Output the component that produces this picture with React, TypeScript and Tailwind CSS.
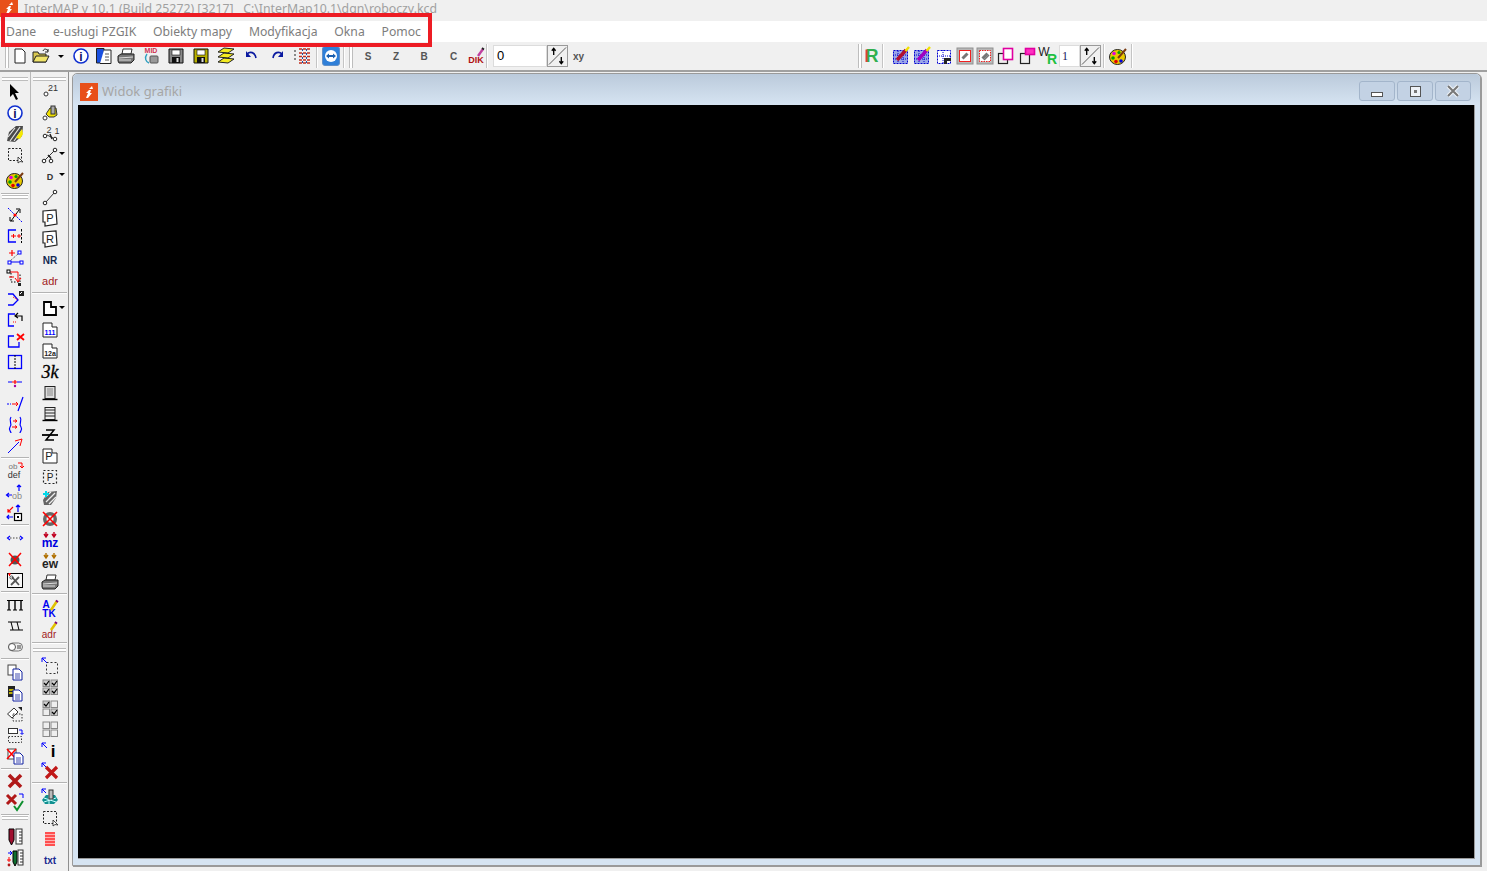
import React, { FC, ReactNode } from 'react';

const B = '#0000ff';
const R = '#ff0000';
const K = '#000000';

const Ico: FC<{ children: ReactNode; w?: number }> = ({ children, w = 20 }) => (
  <svg width={w} height={20} viewBox={`0 0 ${w} 20`} className="block shrink-0">
    {children}
  </svg>
);

const T: FC<{ x: number; y: number; s: number; c?: string; w?: number; children: ReactNode }> = ({ x, y, s, c = K, w = 700, children }) => (
  <text x={x} y={y} fontSize={s} fill={c} fontWeight={w} fontFamily="'Liberation Sans', sans-serif" textAnchor="middle">
    {children}
  </text>
);

const Dot: FC<{ x: number; y: number; r?: number; c?: string }> = ({ x, y, r = 1.8, c = '#222' }) => (
  <circle cx={x} cy={y} r={r} fill="#fff" stroke={c} strokeWidth="1" />
);

const Palette = () => (
  <Ico>
    <ellipse cx="9.5" cy="11" rx="8" ry="7.5" fill="#e8c800" stroke="#222" />
    <circle cx="6" cy="7.5" r="1.8" fill="#e000e0" />
    <circle cx="11" cy="6.5" r="1.6" fill="#00a000" />
    <circle cx="5" cy="12" r="1.8" fill="#00a000" />
    <circle cx="8" cy="15.5" r="1.8" fill="#e00000" />
    <circle cx="13" cy="15" r="1.8" fill="#0000e0" />
    <path d="M10 12 L18 3" stroke="#7a3a10" strokeWidth="2" />
  </Ico>
);

const Cursor = () => (
  <Ico>
    <path d="M5 2 L5 15 L8 12 L11 18 L13 17 L10 11 L14 11 Z" fill={K} />
  </Ico>
);

const Info = () => (
  <Ico>
    <circle cx="10" cy="10" r="7" fill="#fff" stroke="#1030d0" strokeWidth="1.6" />
    <T x={10} y={14.5} s={12} c="#101060">i</T>
  </Ico>
);

const Hatch = () => (
  <Ico>
    <path d="M2 17 L4 8 L11 2 L18 2 L17 12 L10 18 Z" fill="#4a4a4a" />
    <path d="M3 13 L10 4 M5 17 L15 3 M9 17 L17 6" stroke="#e4e4e4" strokeWidth="1.2" />
    <path d="M11 14 L17 5 L18 10 L15 15 Z" fill="#f5e800" />
  </Ico>
);

const DashSel = () => (
  <Ico>
    <rect x="3.5" y="3.5" width="13" height="12" fill="none" stroke="#222" strokeDasharray="2 1.5" />
    <path d="M13 12 L13 18 L15 16.5 L18 17 Z" fill="#fff" stroke="#222" strokeWidth="0.8" />
  </Ico>
);

const Cross = () => (
  <Ico>
    <path d="M3 3 L17 17" stroke={B} strokeDasharray="2 1" />
    <path d="M6 16 L14 5 M11 4 L15 4 L15 8 M5 12 L5 16 L9 16" stroke={K} fill="none" />
    <circle cx="10" cy="10" r="1.6" fill={R} />
  </Ico>
);

const Extend = () => (
  <Ico>
    <path d="M11 4 L3.5 4 L3.5 16 L11 16" fill="none" stroke={B} strokeWidth="1.3" />
    <path d="M16.5 3 L16.5 17" stroke={K} strokeDasharray="2.5 1.5" />
    <path d="M6 10 L11 10 M8.5 8 L8.5 12 M12 10 L16 10 M14 8 L14 12" stroke={R} />
  </Ico>
);

const Insert = () => (
  <Ico>
    <path d="M4 6 L10 6 M7 3 L7 9" stroke={R} strokeWidth="1.2" />
    <rect x="13" y="4" width="3" height="3" fill="#fff" stroke={B} />
    <path d="M5 15 L15 15" stroke={B} />
    <path d="M13 7 L5 14" stroke="#444" strokeDasharray="1 1" />
    <rect x="3" y="14" width="3" height="3" fill="#fff" stroke={B} />
    <rect x="15" y="14" width="3" height="3" fill="#fff" stroke={B} />
  </Ico>
);

const RedRoute = () => (
  <Ico>
    <path d="M6 5 L6 14 L15 14 L15 5" fill="none" stroke={K} strokeDasharray="1.5 1.5" />
    <path d="M4 4 L13 4 L13 13 M10 10 L13 14 L16 10 M4 9 L9 9" fill="none" stroke={R} />
    <rect x="2" y="2" width="3" height="3" fill="#fff" stroke={K} />
    <rect x="13" y="15" width="3" height="3" fill="#222" />
  </Ico>
);

const Chev = () => (
  <Ico>
    <path d="M3 5 L8 5 L13 11 L8 16 L3 16" fill="none" stroke={B} strokeWidth="1.3" />
    <path d="M8 8 L13 11" stroke={R} strokeDasharray="1 1" />
    <path d="M14 2 L19 2 L19 7 L14 7 Z" fill="#222" />
    <path d="M15 5 L17 3" stroke="#fff" />
  </Ico>
);

const BackArrow = () => (
  <Ico>
    <path d="M10 4 L3.5 4 L3.5 16 L9 16" fill="none" stroke={B} strokeWidth="1.3" />
    <path d="M13 3 L10 6 L13 8 M11 6 L17 6 L17 11" fill="none" stroke={K} strokeWidth="1.2" />
    <path d="M8 12 L12 12" stroke={R} strokeDasharray="1 1" />
  </Ico>
);

const CornerX = () => (
  <Ico>
    <path d="M9 5 L3.5 5 L3.5 16 L14 16 L14 11" fill="none" stroke={B} strokeWidth="1.3" />
    <path d="M12 3 L19 9 M19 3 L12 9" stroke={R} strokeWidth="1.8" />
  </Ico>
);

const Split = () => (
  <Ico>
    <rect x="3.5" y="3.5" width="13" height="13" fill="none" stroke={B} strokeWidth="1.3" />
    <path d="M10 3 L10 17" stroke={K} strokeDasharray="2 1" />
  </Ico>
);

const SplitLine = () => (
  <Ico>
    <path d="M3 9 L7 9 M12 9 L17 9" stroke={B} strokeWidth="1.2" />
    <path d="M7 9 L12 9 M10 7 L10 11" stroke={R} strokeWidth="1.2" />
    <circle cx="10" cy="13" r="1.2" fill="#a000a0" />
  </Ico>
);

const ArrowSlash = () => (
  <Ico>
    <path d="M2 10 L6 10" stroke={B} strokeDasharray="2 1" strokeWidth="1.2" />
    <path d="M7 10 L13 10 M11 8 L13 10 L11 12" fill="none" stroke={R} />
    <path d="M18 3 L13 17" stroke={B} strokeWidth="1.2" />
  </Ico>
);

const Waves = () => (
  <Ico>
    <path d="M6 2 C3 6 8 8 5 12 C3 15 6 16 6 18 M15 2 C18 6 13 8 16 12 C18 15 15 16 15 18" fill="none" stroke={B} strokeWidth="1.2" />
    <path d="M8 6 L12 6 M10 4.5 L12 6 L10 7.5 M7 12 L12 12 M10 10.5 L12 12 L10 13.5" fill="none" stroke={R} />
  </Ico>
);

const Diag = () => (
  <Ico>
    <path d="M3 17 L14 6" stroke={B} />
    <path d="M10 5 L17 3 L15 10" fill="none" stroke={R} />
  </Ico>
);

const ObDef = () => (
  <Ico>
    <T x={8} y={8} s={8} c="#777" w={400}>ob</T>
    <T x={9} y={17} s={9} c="#333" w={400}>def</T>
    <path d="M13 2 L17 2 L17 7 M15 5 L17 7 L19 5" fill="none" stroke={R} />
  </Ico>
);

const ArrowsOb = () => (
  <Ico>
    <T x={12} y={17} s={9} c="#888" w={400}>ob</T>
    <path d="M7 13 L1.5 13 M4 11 L1.5 13 L4 15 M14 9 L14 3 M12 5 L14 3 L16 5" fill="none" stroke={B} strokeWidth="1.2" />
  </Ico>
);

const ArrowsBox = () => (
  <Ico>
    <rect x="9.5" y="10.5" width="7" height="7" fill="#fff" stroke={K} strokeWidth="1.2" />
    <rect x="12" y="13" width="2" height="2" fill={K} />
    <path d="M8 14 L2 14 M4 12 L2 14 L4 16 M13 9 L13 2 M11 4 L13 2 L15 4" fill="none" stroke={B} strokeWidth="1.2" />
    <path d="M8 4 L3 9 M3 6 L3 9 L6 9" fill="none" stroke={R} strokeWidth="1.2" />
  </Ico>
);

const Width = () => (
  <Ico>
    <path d="M5 10 L15 10" stroke="#444" strokeDasharray="1.5 1.5" />
    <path d="M5 8 L2.5 10 L5 12 M15 8 L17.5 10 L15 12" fill="none" stroke={B} strokeWidth="1.2" />
  </Ico>
);

const NodeX = () => (
  <Ico>
    <circle cx="10" cy="11" r="4.5" fill="#555" />
    <path d="M4 4 L16 17 M16 4 L4 17" stroke={R} strokeWidth="1.5" />
  </Ico>
);

const BoxTools = () => (
  <Ico>
    <rect x="2.5" y="3.5" width="15" height="14" fill="#f8f8f8" stroke={K} />
    <path d="M6 15 L14 7 M7 7 L14 15" stroke="#555" strokeWidth="1.8" />
    <circle cx="6.5" cy="7.5" r="1.6" fill="none" stroke="#444" />
    <path d="M3 4 L6 4 M4.5 3 L4.5 6" stroke={R} />
  </Ico>
);

const Rail = () => (
  <Ico>
    <path d="M2 5.5 L18 5.5 M2 15 L6 15 M8 15 L12 15 M14 15 L18 15" stroke={K} />
    <path d="M4 5 L4 15 M10 5 L10 15 M16 5 L16 15" stroke={K} strokeWidth="1.4" />
  </Ico>
);

const Stairs = () => (
  <Ico>
    <path d="M3 6 L16 6 M5 14 L18 14 M6 6 L8 14 M12 6 L14 14" stroke={K} fill="none" />
  </Ico>
);

const Pipe = () => (
  <Ico>
    <rect x="3.5" y="6" width="14" height="8" rx="4" fill="#eee" stroke="#777" />
    <circle cx="7" cy="10" r="3.5" fill="#fff" stroke="#555" />
    <rect x="12" y="8" width="4" height="4" fill="#999" />
  </Ico>
);

const Doc: FC<{ x: number; y: number; fill?: string }> = ({ x, y, fill = '#fff' }) => (
  <g>
    <path d={`M${x} ${y} L${x + 6} ${y} L${x + 9} ${y + 3} L${x + 9} ${y + 11} L${x} ${y + 11} Z`} fill={fill} stroke="#1020a0" />
    <path d={`M${x + 2} ${y + 5} L${x + 7} ${y + 5} M${x + 2} ${y + 7} L${x + 7} ${y + 7} M${x + 2} ${y + 9} L${x + 7} ${y + 9}`} stroke="#1020a0" strokeWidth="0.8" />
  </g>
);

const Copy1 = () => (
  <Ico>
    <rect x="3" y="3" width="8" height="10" fill="#fff" stroke="#444" />
    <Doc x={8} y={7} />
  </Ico>
);

const Copy2 = () => (
  <Ico>
    <path d="M3 3 L10 3 L10 14 L3 14 Z" fill="#222" />
    <path d="M4 7 L9 7 M4 10 L9 10" stroke="#f0e000" strokeWidth="1.4" />
    <Doc x={8} y={7} />
  </Ico>
);

const Diamond = () => (
  <Ico>
    <path d="M2.5 10 L9 4 L13 8 L7 14 Z" fill="#fff" stroke="#333" />
    <rect x="8" y="10" width="9" height="7" fill="none" stroke="#333" strokeDasharray="1.5 1.5" />
    <path d="M13 3 L17 3 L17 7 Z" fill="#222" />
  </Ico>
);

const BoxFlip = () => (
  <Ico>
    <rect x="3.5" y="3.5" width="9" height="5" fill="#fff" stroke="#333" />
    <rect x="3.5" y="11.5" width="13" height="6" fill="none" stroke="#333" strokeDasharray="1.5 1.5" />
    <path d="M14 5 L17 5 L17 9 M15.5 8 L17 9.5 L18.5 8" fill="none" stroke={B} />
  </Ico>
);

const DocX = () => (
  <Ico>
    <rect x="3" y="3" width="8" height="10" fill="#fff" stroke="#444" />
    <path d="M2 3 L11 13 M11 3 L2 13" stroke={R} strokeWidth="1.5" />
    <Doc x={9} y={7} />
  </Ico>
);

const BigX = () => (
  <Ico>
    <path d="M4 4 L16 16 M16 4 L4 16" stroke="#b01818" strokeWidth="3.6" />
  </Ico>
);

const XCheck = () => (
  <Ico>
    <path d="M2 3 L11 12 M11 3 L2 12" stroke="#b01818" strokeWidth="3" />
    <path d="M9 14 L12 18 L18 9" fill="none" stroke="#109030" strokeWidth="2" />
    <path d="M14 2 L18 2 L18 6" fill="none" stroke={B} />
  </Ico>
);

const Pencils = () => (
  <Ico>
    <path d="M4 2 L9 2 L9 13 L6.5 18 L4 13 Z" fill="#a01030" stroke={K} />
    <rect x="11" y="2" width="6" height="15" fill="#fff" stroke="#333" />
    <path d="M14 5 L17 5 M14 8 L17 8 M14 11 L17 11 M14 14 L17 14" stroke="#333" />
  </Ico>
);

const Pencils2 = () => (
  <Ico>
    <path d="M8 3 L12 3 L12 14 L10 18 L8 14 Z" fill="#107030" stroke={K} />
    <rect x="13" y="2" width="5" height="15" fill="#fff" stroke="#333" />
    <path d="M15 5 L18 5 M15 8 L18 8 M15 11 L18 11 M15 14 L18 14" stroke="#333" />
    <path d="M3 5 L7 5 M5 3 L7 5 L5 7" fill="none" stroke={B} />
    <path d="M4 9 L4 14 M2 12 L6 12" stroke={R} />
    <circle cx="4" cy="17" r="1.4" fill="#b01818" />
  </Ico>
);

const NumDot = () => (
  <Ico>
    <circle cx="6" cy="12" r="2" fill="#fff" stroke="#333" />
    <T x={13} y={9} s={9} c="#333" w={400}>21</T>
  </Ico>
);

const BldDot = () => (
  <Ico>
    <circle cx="5" cy="15" r="2" fill="#fff" stroke="#333" />
    <path d="M6 11 L10 5 L16 5 L17 12 L14 14 L9 14 Z" fill="#f0e000" stroke="#333" />
    <rect x="11" y="3" width="4" height="8" fill="#aaa" stroke="#333" />
  </Ico>
);

const Dots21 = () => (
  <Ico>
    <T x={9} y={9} s={9} c="#333" w={400}>2</T>
    <T x={17} y={10} s={9} c="#333" w={400}>1</T>
    <Dot x={5} y={12} />
    <Dot x={15} y={15} />
    <path d="M7 11 L13 14" stroke="#333" />
    <path d="M10 10 L12 15" stroke="#222" strokeWidth="1.5" />
  </Ico>
);

const Dots3 = () => (
  <Ico>
    <Dot x={4} y={16} />
    <Dot x={11} y={16} />
    <Dot x={15} y={5} />
    <path d="M5 15 L14 6 M11 14 L9 10" stroke="#333" />
    <path d="M8 10 L11 13" stroke="#222" strokeWidth="1.5" />
  </Ico>
);

const Line = () => (
  <Ico>
    <Dot x={5} y={16} />
    <Dot x={15} y={5} />
    <path d="M6 15 L14 6" stroke="#333" />
  </Ico>
);

const Label: FC<{ t: string }> = ({ t }) => (
  <Ico>
    <path d="M3 3 L16 2 L17 16 L5 18 L5 14 L3 14 Z" fill="#fff" stroke="#222" strokeWidth="1.2" />
    <T x={10} y={14} s={11} c="#222" w={400}>{t}</T>
  </Ico>
);

const DownCaret = () => <span className="absolute right-[3px] top-[8px] border-x-[3px] border-t-[3px] border-x-transparent border-t-black" />;

const Sheet = () => (
  <Ico>
    <path d="M4 3 L11 3 L11 8 L16 8 L16 16 L4 16 Z" fill="#fff" stroke={K} strokeWidth="1.8" />
  </Ico>
);

const Sheet111 = () => (
  <Ico>
    <path d="M3 3 L12 3 L12 7 L17 7 L17 17 L3 17 Z" fill="#fff" stroke="#222" />
    <T x={10} y={15} s={7} c={B}>111</T>
  </Ico>
);

const Sheet12 = () => (
  <Ico>
    <path d="M3 3 L12 3 L12 7 L17 7 L17 17 L3 17 Z" fill="#fff" stroke="#222" />
    <T x={10} y={15} s={7} c="#222">12a</T>
  </Ico>
);

const K3 = () => (
  <Ico>
    <text x="10" y="16" fontSize="18" fontStyle="italic" fontFamily="'Liberation Serif', serif" textAnchor="middle" fill={K} stroke={K} strokeWidth="0.3">3k</text>
  </Ico>
);

const Bld1 = () => (
  <Ico>
    <rect x="5" y="3.5" width="10" height="12" fill="#ddd" stroke="#222" />
    <path d="M7 6 L13 6 M7 8 L13 8 M7 10 L13 10 M7 12 L13 12" stroke="#888" />
    <path d="M2.5 16.5 L17.5 16.5" stroke={K} strokeWidth="1.4" />
  </Ico>
);

const Bld2 = () => (
  <Ico>
    <rect x="5" y="3.5" width="10" height="12" fill="#eee" stroke="#222" />
    <path d="M5 6 L15 6 M5 9 L15 9 M5 12 L15 12" stroke="#222" />
    <path d="M2.5 16.5 L17.5 16.5" stroke={K} strokeWidth="1.4" />
  </Ico>
);

const ZStrike = () => (
  <Ico>
    <path d="M6 5 L14 5 L6 15 L14 15" fill="none" stroke={K} strokeWidth="1.5" />
    <path d="M2 10 L18 10" stroke={K} strokeWidth="1.8" />
  </Ico>
);

const SheetP = () => (
  <Ico>
    <path d="M3 3 L12 3 L12 7 L17 7 L17 17 L3 17 Z" fill="#fff" stroke="#222" />
    <T x={9} y={14} s={11} c="#222" w={400}>P</T>
  </Ico>
);

const DashP = () => (
  <Ico>
    <rect x="3.5" y="3.5" width="13" height="13" fill="none" stroke="#222" strokeDasharray="2 2" strokeWidth="1.2" />
    <T x={10} y={14} s={10} c="#222" w={400}>P</T>
  </Ico>
);

const Link = () => (
  <Ico>
    <path d="M3 12 L8 4 L17 3 L16 10 L11 17 L4 17 Z" fill="#666" />
    <path d="M6 14 L15 5 M5 9 L11 4 M9 16 L16 9" stroke="#eee" strokeWidth="1.3" />
    <path d="M6 3 L6 9 M3 6 L9 6" stroke="#00d8e8" strokeWidth="2" />
  </Ico>
);

const LinkX = () => (
  <Ico>
    <circle cx="10" cy="10" r="7" fill="#666" />
    <circle cx="10" cy="10" r="3.5" fill="#eee" />
    <path d="M3 3 L17 17 M17 3 L3 17" stroke={R} strokeWidth="1.6" />
  </Ico>
);

const MZ = () => (
  <Ico>
    <path d="M6 2 L6 6 M4 4 L6 7 L8 4 M14 2 L14 6 M12 4 L14 7 L16 4" fill="none" stroke="#c00020" strokeWidth="1.4" />
    <T x={10} y={17} s={12} c="#0000e0">mz</T>
  </Ico>
);

const EW = () => (
  <Ico>
    <path d="M6 2 L6 6 M4 4 L6 7 L8 4 M14 2 L14 6 M12 4 L14 7 L16 4" fill="none" stroke="#b07000" strokeWidth="1.4" />
    <T x={10} y={17} s={12} c="#222">ew</T>
  </Ico>
);

const Printer = () => (
  <Ico>
    <path d="M7 3 L16 3 L15 8 L6 8 Z" fill="#fff" stroke="#333" />
    <path d="M2 10 L5 8 L18 8 L18 14 L15 17 L3 17 L2 15 Z" fill="#777" stroke="#222" />
    <path d="M3 12 L17 11 M3 14 L15 14" stroke="#ddd" />
  </Ico>
);

const ATK = () => (
  <Ico>
    <T x={6} y={9} s={10} c="#0000f0">A</T>
    <T x={9} y={18} s={10} c="#0000f0">TK</T>
    <path d="M11 11 L17 2" stroke="#e0c000" strokeWidth="2.6" />
    <path d="M16.5 3 L17.5 1.5" stroke="#800080" strokeWidth="2.6" />
  </Ico>
);

const AdrPen = () => (
  <Ico>
    <T x={9} y={18} s={10} c="#a02020" w={400}>adr</T>
    <path d="M11 10 L16 3" stroke="#e0c000" strokeWidth="2.6" />
    <path d="M15.5 3.5 L16.5 2" stroke="#800080" strokeWidth="2.6" />
  </Ico>
);

const Corner = () => (
  <Ico>
    <rect x="6.5" y="6.5" width="11" height="11" fill="none" stroke="#333" strokeDasharray="2 2" />
    <path d="M2 2 L7 7 M2 2 L6 2 M2 2 L2 6" stroke={B} fill="none" />
  </Ico>
);

const Checks: FC<{ on: boolean[] }> = ({ on }) => (
  <Ico>
    {[0, 1, 2, 3].map((i) => {
      const x = 3 + (i % 2) * 8;
      const y = 3 + Math.floor(i / 2) * 8;
      return (
        <g key={i}>
          <rect x={x} y={y} width="6.5" height="6.5" fill={on[i] ? '#ccc' : '#eee'} stroke="#888" />
          {on[i] && <path d={`M${x + 1} ${y + 3} L${x + 3} ${y + 5} L${x + 6} ${y + 1}`} fill="none" stroke={K} strokeWidth="1.2" />}
        </g>
      );
    })}
  </Ico>
);

const CornerI = () => (
  <Ico>
    <T x={13} y={17} s={17} c={K}>i</T>
    <path d="M2 3 L7 8 M2 3 L6 3 M2 3 L2 7" stroke={B} fill="none" />
  </Ico>
);

const CornerXBig = () => (
  <Ico>
    <path d="M6 6 L17 17 M17 6 L6 17" stroke="#c01818" strokeWidth="3.2" />
    <path d="M2 2 L6 6 M2 2 L6 2 M2 2 L2 6" stroke={B} fill="none" />
  </Ico>
);

const Network = () => (
  <Ico>
    <path d="M2 13 L6 8 L15 8 L18 13 L14 17 L5 17 Z" fill="#109090" />
    <path d="M4 11 L16 15 M4 15 L16 11 M9 8 L9 17" stroke="#cff" />
    <rect x="9" y="3" width="4" height="9" fill="#bbb" stroke="#333" />
    <path d="M2 2 L6 6 M2 2 L6 2 M2 2 L2 6" stroke={B} fill="none" />
  </Ico>
);

const RedLines = () => (
  <Ico>
    <rect x="5" y="3" width="10" height="14" fill="#ff5050" />
    <path d="M5 5.5 L15 5.5 M5 8.5 L15 8.5 M5 11.5 L15 11.5 M5 14.5 L15 14.5" stroke="#ffb0b0" />
  </Ico>
);

const Txt: FC<{ t: string; c: string; s?: number; w?: number }> = ({ t, c, s = 10, w = 700 }) => (
  <Ico>
    <T x={10} y={14} s={s} c={c} w={w}>{t}</T>
  </Ico>
);

const Grip = () => <div className="mx-[2px] h-[4px] shrink-0 border-y border-y-[#bdbdbd] bg-white" />;
const HSep: FC<{ cls?: string }> = ({ cls = 'my-[1px]' }) => <div className={`mx-[1px] h-[2px] shrink-0 border-b border-b-white bg-[#b4b4b4] ${cls}`} />;

const Btn: FC<{ children: ReactNode; cls?: string }> = ({ children, cls = 'h-[21px]' }) => (
  <div className={`relative flex shrink-0 items-center justify-center ${cls}`}>{children}</div>
);

const LeftCol1 = () => (
  <div className="flex w-[31px] shrink-0 flex-col border-r border-r-[#b9b9b9] pt-[5px]">
    <Grip />
    <Btn><Cursor /></Btn>
    <Btn><Info /></Btn>
    <Btn><Hatch /></Btn>
    <Btn><DashSel /></Btn>
    <Btn cls="mt-[3px] h-[24px]"><Palette /></Btn>
    <HSep cls="mt-[1px]" />
    <Grip />
    <Btn cls="mt-[5px] h-[21px]"><Cross /></Btn>
    <Btn><Extend /></Btn>
    <Btn><Insert /></Btn>
    <Btn><RedRoute /></Btn>
    <Btn><Chev /></Btn>
    <Btn><BackArrow /></Btn>
    <Btn><CornerX /></Btn>
    <Btn><Split /></Btn>
    <Btn><SplitLine /></Btn>
    <Btn><ArrowSlash /></Btn>
    <Btn><Waves /></Btn>
    <Btn><Diag /></Btn>
    <HSep />
    <Btn><ObDef /></Btn>
    <Btn><ArrowsOb /></Btn>
    <Btn><ArrowsBox /></Btn>
    <HSep />
    <Btn><Width /></Btn>
    <Btn><NodeX /></Btn>
    <Btn><BoxTools /></Btn>
    <HSep />
    <Btn><Rail /></Btn>
    <Btn><Stairs /></Btn>
    <Btn><Pipe /></Btn>
    <HSep />
    <Btn><Copy1 /></Btn>
    <Btn><Copy2 /></Btn>
    <Btn><Diamond /></Btn>
    <Btn><BoxFlip /></Btn>
    <Btn><DocX /></Btn>
    <HSep cls="mt-[2px]" />
    <Btn><BigX /></Btn>
    <Btn><XCheck /></Btn>
    <HSep cls="mt-[2px]" />
    <Grip />
    <Btn cls="mt-[6px] h-[21px]"><Pencils /></Btn>
    <Btn><Pencils2 /></Btn>
  </div>
);

const LeftCol2 = () => (
  <div className="flex w-[38px] shrink-0 flex-col border-r border-r-[#8f8f8f] pt-[5px]">
    <Grip />
    <Btn><NumDot /></Btn>
    <Btn><BldDot /></Btn>
    <Btn><Dots21 /></Btn>
    <Btn><Dots3 /><DownCaret /></Btn>
    <Btn><Txt t="D" c="#333" s={9} /><DownCaret /></Btn>
    <Btn><Line /></Btn>
    <Btn><Label t="P" /></Btn>
    <Btn><Label t="R" /></Btn>
    <Btn><Txt t="NR" c="#152a50" s={10} /></Btn>
    <Btn><Txt t="adr" c="#a02020" s={11} w={400} /></Btn>
    <HSep cls="mt-[1px] mb-[4px]" />
    <Btn><Sheet /><DownCaret /></Btn>
    <Btn><Sheet111 /></Btn>
    <Btn><Sheet12 /></Btn>
    <Btn><K3 /></Btn>
    <Btn><Bld1 /></Btn>
    <Btn><Bld2 /></Btn>
    <Btn><ZStrike /></Btn>
    <Btn><SheetP /></Btn>
    <Btn><DashP /></Btn>
    <Btn><Link /></Btn>
    <Btn><LinkX /></Btn>
    <Btn><MZ /></Btn>
    <Btn><EW /></Btn>
    <Btn><Printer /></Btn>
    <HSep cls="mt-[1px] mb-[3px]" />
    <Btn><ATK /></Btn>
    <Btn><AdrPen /></Btn>
    <HSep cls="mt-[2px] mb-[4px]" />
    <Grip />
    <Btn cls="mt-[3px] h-[21px]"><Corner /></Btn>
    <Btn><Checks on={[true, true, true, true]} /></Btn>
    <Btn><Checks on={[true, false, false, true]} /></Btn>
    <Btn><Checks on={[false, false, false, false]} /></Btn>
    <Btn><CornerI /></Btn>
    <Btn><CornerXBig /></Btn>
    <HSep cls="mt-[1px] mb-[2px]" />
    <Btn><Network /></Btn>
    <Btn><DashSel /></Btn>
    <Btn><RedLines /></Btn>
    <Btn><Txt t="txt" c="#1a2a90" s={10} /></Btn>
  </div>
);

const VSep = () => <div className="mx-[2px] h-[24px] w-[2px] shrink-0 border-r border-r-white bg-[#c4c4c4]" />;
const VGrip = () => <div className="mx-[2px] h-[24px] w-[4px] shrink-0 border-x border-x-[#bdbdbd] bg-white" />;

const Spin: FC<{ w: string }> = ({ w }) => (
  <div className={`h-[22px] shrink-0 border border-[#9a9a9a] bg-[#f0f0f0] ${w}`}>
    <svg width="100%" height="100%" viewBox="0 0 20 20">
      <path d="M1 19 L19 1" stroke="#555" />
      <path d="M6 9 L6 2 M4 4.5 L6 2 L8 4.5 M14 11 L14 18 M12 15.5 L14 18 L16 15.5" fill="none" stroke={K} strokeWidth="1.4" />
    </svg>
  </div>
);

const Tb: FC<{ x: number; children: ReactNode }> = ({ x, children }) => (
  <div className="flex shrink-0 items-center justify-center" style={{ width: x }}>{children}</div>
);

const NewDoc = () => (
  <Ico w={16}>
    <path d="M3 3 L10 3 L13 6 L13 17 L3 17 Z" fill="#fff" stroke="#222" />
  </Ico>
);

const Open = () => (
  <Ico>
    <path d="M2 6 L7 6 L8 8 L15 8 L15 16 L2 16 Z" fill="#d8c850" stroke="#222" />
    <path d="M2 16 L5 10 L18 10 L15 16 Z" fill="#f0e468" stroke="#222" />
    <path d="M12 5 C13 2 16 3 17 5 M17 3 L17 6 L14 6" fill="none" stroke="#222" />
  </Ico>
);

const DocBlue = () => (
  <Ico>
    <path d="M2.5 2.5 L10 2.5 L10 17 L2.5 17 Z" fill="#1a50e0" stroke="#222" />
    <path d="M10 4 L17 4 L17 17.5 L6 17.5" fill="#fff" stroke="#222" />
    <path d="M11 8 L15 8 M11 11 L15 11 M11 14 L15 14" stroke="#555" />
  </Ico>
);

const Mid = () => (
  <Ico>
    <T x={10} y={6.5} s={7} c="#d03050">MID</T>
    <path d="M6 8 C3 12 5 16 8 17" fill="none" stroke="#30a0c0" strokeWidth="1.4" />
    <rect x="9" y="10" width="8" height="7" rx="1" fill="#999" stroke="#555" />
  </Ico>
);

const Floppy: FC<{ c: string }> = ({ c }) => (
  <Ico>
    <path d="M3 3 L17 3 L17 17 L3 17 Z" fill={c} stroke="#111" />
    <rect x="6" y="4" width="8" height="5" fill="#fff" stroke="#111" strokeWidth="0.6" />
    <rect x="6" y="11" width="8" height="6" fill="#111" />
    <rect x="10.5" y="12" width="2" height="4" fill="#ddd" />
  </Ico>
);

const Layers = () => (
  <Ico>
    <path d="M8 2 L18 3 L12 7 L2 6 Z M8 7 L18 8 L12 12 L2 11 Z M8 12 L18 13 L12 17 L2 16 Z" fill="#f4ec20" stroke="#222" />
  </Ico>
);

const Undo: FC<{ flip?: boolean }> = ({ flip }) => (
  <Ico>
    <g transform={flip ? 'translate(20,0) scale(-1,1)' : undefined}>
      <path d="M5 8 C8 5 13 6 14 12" fill="none" stroke="#0a1aa0" strokeWidth="1.6" />
      <path d="M4 5 L4 11 L9 11 Z" fill="#0a1aa0" />
    </g>
  </Ico>
);

const GridCols = () => (
  <Ico>
    <path d="M7 3 L18 3 M7 7 L18 7 M7 10.5 L18 10.5 M7 14 L18 14 M7 17 L18 17" stroke="#c03020" strokeWidth="1.4" strokeDasharray="3 1" />
    <path d="M10.5 3 L10.5 17 M14.5 3 L14.5 17" stroke="#2050a0" strokeDasharray="2 2" />
    <path d="M2 5 L4 5 M2 9 L4 9 M2 13 L4 13" stroke="#222" />
  </Ico>
);

const Team = () => (
  <div className="flex h-[20px] w-[18px] items-center justify-center rounded-[3px] border border-[#5f8fc8] bg-[#2f7fd8]">
    <svg width="14" height="14" viewBox="0 0 14 14">
      <circle cx="7" cy="7" r="6" fill="#fff" />
      <path d="M2 7 L5 4.5 L5 6 L9 6 L9 4.5 L12 7 L9 9.5 L9 8 L5 8 L5 9.5 Z" fill="#1a5fb0" />
    </svg>
  </div>
);

const Dik = () => (
  <Ico>
    <T x={9} y={17} s={9} c="#b01010">DIK</T>
    <path d="M11 10 L16 3" stroke="#c040a0" strokeWidth="2.4" />
    <path d="M15.5 3.5 L16.5 2" stroke="#222" strokeWidth="2.4" />
  </Ico>
);

const TopTxt: FC<{ t: string }> = ({ t }) => (
  <span className="font-['Liberation_Sans',sans-serif] text-[10px] font-bold text-[#555]">{t}</span>
);

const GridPen: FC<{ c: string }> = ({ c }) => (
  <Ico>
    <rect x="2.5" y="4.5" width="14" height="13" fill="#9aa6e8" stroke="#0000d0" strokeDasharray="2 1" />
    <path d="M2 9 L16 9 M2 13 L16 13 M7 5 L7 17 M12 5 L12 17" stroke="#0000d0" strokeDasharray="1 1" />
    <path d="M6 14 L15 4" stroke={c} strokeWidth="3.4" />
    <path d="M14.5 5 L18 1" stroke="#f0e000" strokeWidth="2.4" />
  </Ico>
);

const GridTool = () => (
  <Ico>
    <rect x="3.5" y="4.5" width="13" height="13" fill="#fff" stroke="#0000d0" strokeDasharray="2 1" />
    <path d="M3 10 L16 10 M9 4 L9 17" stroke="#0000d0" strokeDasharray="1 1" />
    <path d="M10 18 L10 12 L17 12 L17 15 L13 15 L13 18 Z" fill="#222" />
  </Ico>
);

const RedBox: FC<{ double?: boolean }> = ({ double }) => (
  <Ico>
    <rect x="2" y="2" width="16" height="16" fill="#b8b8b8" stroke="#909090" />
    <rect x="4.5" y="4.5" width="11" height="11" fill="#fff" stroke="#f02020" strokeDasharray={double ? '1.5 1' : undefined} />
    <path d="M7.5 12.5 L12.5 7.5" stroke="#777" strokeWidth="3" />
    {double && <path d="M9 14 L14 9" stroke="#777" strokeWidth="1.6" />}
  </Ico>
);

const PinkStack: FC<{ top?: boolean }> = ({ top }) => (
  <Ico>
    <rect x="2.5" y="7.5" width="9" height="10" fill="#eee" stroke="#222" strokeWidth="1.2" />
    <rect x="7.5" y="2.5" width="9" height={top ? 6 : 11} fill={top ? '#ff30c0' : '#fff'} stroke="#e000a0" strokeWidth="1.6" />
  </Ico>
);

const WkR = () => (
  <Ico>
    <T x={6} y={10} s={12} c="#222" w={400}>W</T>
    <T x={14} y={18} s={14} c="#20c040">R</T>
  </Ico>
);

const GreenR = () => (
  <Ico>
    <T x={10} y={16} s={18} c="#30b050">R</T>
    <path d="M4.5 3.5 L4.5 16" stroke="#e04030" strokeWidth="2" />
  </Ico>
);

const TopBar = () => (
  <div className="flex h-[28px] shrink-0 items-center bg-[#f0f0f0]">
    <div className="flex h-full w-[590px] shrink-0 items-center pl-[3px]">
      <VGrip />
      <Tb x={17}><NewDoc /></Tb>
      <Tb x={25}><Open /></Tb>
      <Tb x={16}><span className="border-x-[3px] border-t-[3px] border-x-transparent border-t-black" /></Tb>
      <Tb x={24}><Info /></Tb>
      <Tb x={21}><DocBlue /></Tb>
      <Tb x={24}><Printer /></Tb>
      <Tb x={25}><Mid /></Tb>
      <Tb x={26}><Floppy c="#888" /></Tb>
      <Tb x={24}><Floppy c="#b8b000" /></Tb>
      <Tb x={26}><Layers /></Tb>
      <Tb x={25}><Undo /></Tb>
      <Tb x={25}><Undo flip /></Tb>
      <Tb x={25}><GridCols /></Tb>
      <VSep />
      <Tb x={21}><Team /></Tb>
      <VSep />
      <VGrip />
      <Tb x={26}><TopTxt t="S" /></Tb>
      <Tb x={30}><TopTxt t="Z" /></Tb>
      <Tb x={26}><TopTxt t="B" /></Tb>
      <Tb x={33}><TopTxt t="C" /></Tb>
      <Tb x={14}><Dik /></Tb>
      <VSep />
      <div className="ml-[3px] flex h-[22px] w-[54px] shrink-0 items-center border border-[#dcdcdc] bg-white pl-[3px] font-['Liberation_Sans',sans-serif] text-[13px] text-black">0</div>
      <Spin w="w-[21px]" />
      <Tb x={21}><TopTxt t="xy" /></Tb>
    </div>
    <div className="ml-[266px] flex h-full w-[272px] shrink-0 items-center">
      <VGrip />
      <Tb x={16}><GreenR /></Tb>
      <VSep />
      <Tb x={5}><span /></Tb>
      <Tb x={20}><GridPen c="#b01030" /></Tb>
      <Tb x={22}><GridPen c="#a000c0" /></Tb>
      <Tb x={22}><GridTool /></Tb>
      <Tb x={20}><RedBox /></Tb>
      <Tb x={20}><RedBox double /></Tb>
      <Tb x={22}><PinkStack /></Tb>
      <Tb x={21}><PinkStack top /></Tb>
      <Tb x={20}><WkR /></Tb>
      <div className="ml-[1px] flex h-[22px] w-[21px] shrink-0 items-center border border-[#dcdcdc] bg-white pl-[2px] font-['Liberation_Serif',serif] text-[12px] text-[#202060]">1</div>
      <Spin w="w-[21px]" />
      <VSep />
      <Tb x={22}><Palette /></Tb>
      <VSep />
    </div>
  </div>
);

const Logo: FC<{ cls: string }> = ({ cls }) => (
  <div className={`flex shrink-0 items-center justify-center bg-[#e8501a] ${cls}`}>
    <svg width="12" height="14" viewBox="0 0 12 14">
      <path d="M3 13 L5 8 L3 8 L6 5 L8 5 L7 8 L9 8 L5 13 Z M6 4 L9 1 L10 4 Z" fill="#fff" />
    </svg>
  </div>
);

const WinBtn: FC<{ children: ReactNode }> = ({ children }) => (
  <div className="flex h-[20px] w-[36px] items-center justify-center rounded-[3px] border border-[#a3b5cb] bg-[#c3d2e4]">{children}</div>
);

const Window = () => (
  <div className="flex min-w-0 flex-1 flex-col rounded-t-[5px] border border-[#9a9a9a] bg-[#d6e4f2] shadow-[1px_1px_0_#9a9a9a]">
    <div className="flex h-[31px] shrink-0 items-center rounded-t-[5px] bg-gradient-to-b from-[#bbcadb] to-[#d6e4f2] pl-[7px] pr-[9px] pt-[4px]">
      <Logo cls="h-[18px] w-[18px]" />
      <span className="ml-[4px] text-[13px] text-[#a6a6a6]">Widok grafiki</span>
      <div className="ml-auto flex gap-[2px] -mt-[1px]">
        <WinBtn><span className="mt-[7px] h-[5px] w-[12px] border border-[#555] bg-white" /></WinBtn>
        <WinBtn><span className="flex h-[11px] w-[11px] items-center justify-center border border-[#555] bg-[#eef2f7]"><span className="h-[3px] w-[3px] bg-[#777]" /></span></WinBtn>
        <WinBtn>
          <svg width="14" height="14" viewBox="0 0 14 14"><path d="M2 2 L12 12 M12 2 L2 12" stroke="#eef2f7" strokeWidth="4" /><path d="M2 2 L12 12 M12 2 L2 12" stroke="#777" strokeWidth="2" /></svg>
        </WinBtn>
      </div>
    </div>
    <div className="min-h-0 flex-1 px-[5px] pb-[6px]">
      <div className="h-full border-r border-b border-r-[#9a9a9a] border-b-[#9a9a9a] bg-black" />
    </div>
  </div>
);

const App: FC = () => (
  <div className="relative flex h-[871px] w-[1487px] flex-col overflow-hidden bg-[#f0f0f0] font-['Noto_Sans',sans-serif]">
    <div className="flex h-[21px] shrink-0 items-start bg-[#f0f0f0]">
      <Logo cls="h-[18px] w-[18px] -mt-[1px]" />
      <span className="ml-[6px] whitespace-nowrap text-[12.3px] leading-[18px] text-[#a0a0a0]">
        InterMAP v 10.1 (Build 25272) [3217]&nbsp;&nbsp;&nbsp;C:\InterMap10.1\dgn\roboczy.kcd
      </span>
    </div>
    <div className="flex h-[21px] shrink-0 items-center gap-[16.8px] bg-white pl-[6px] pt-[2px] text-[12.2px] text-[#7d7d7d]">
      <span>Dane</span>
      <span>e-usługi PZGIK</span>
      <span>Obiekty mapy</span>
      <span>Modyfikacja</span>
      <span>Okna</span>
      <span>Pomoc</span>
    </div>
    <TopBar />
    <div className="h-[2px] shrink-0 bg-[#a0a0a0]" />
    <div className="flex min-h-0 flex-1">
      <LeftCol1 />
      <LeftCol2 />
      <div className="flex min-w-0 flex-1 pt-[1px] pr-[6px] pb-[5px] pl-[3px]">
        <Window />
      </div>
    </div>
    <div className="absolute left-[1px] top-[13px] h-[34px] w-[431px] border-[4px] border-[#ed1c24]" />
  </div>
);

export default App;
